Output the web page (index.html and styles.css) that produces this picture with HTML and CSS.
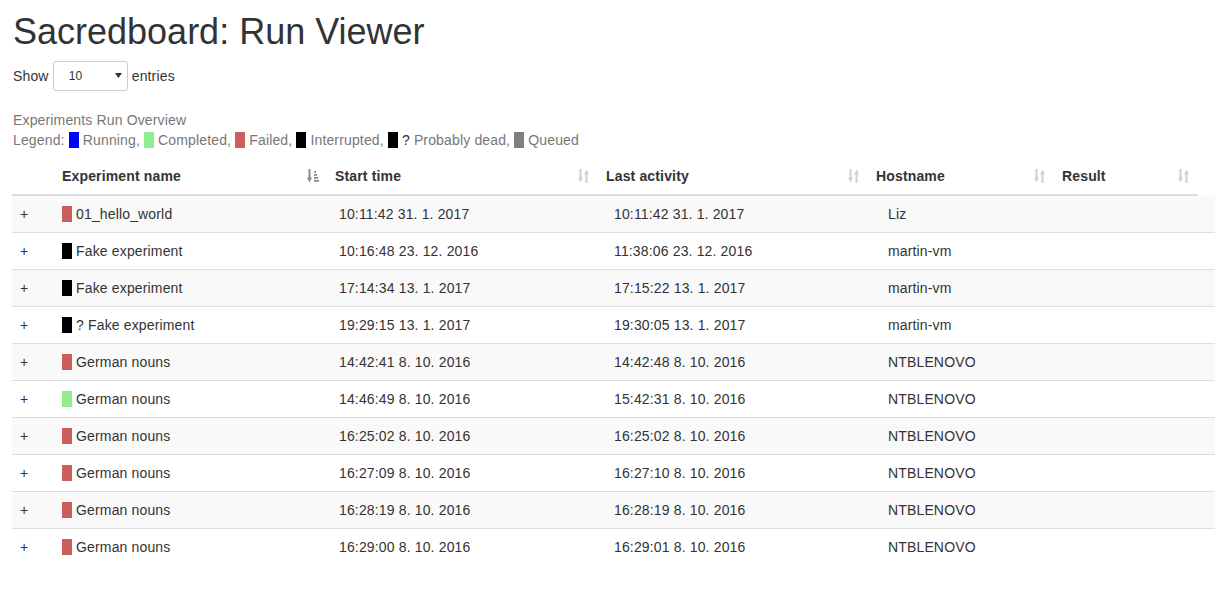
FILE: index.html
```html
<!DOCTYPE html>
<html>
<head>
<meta charset="utf-8">
<title>Sacredboard: Run Viewer</title>
<link rel="stylesheet" href="styles.css">
</head>
<body>
<div class="page">
  <h1 class="title">Sacredboard: Run Viewer</h1>
  <div class="length">Show <span class="select"><span class="select-val">10</span><svg class="select-arrow" width="7" height="5" viewBox="0 0 7 5"><polygon points="0,0 7,0 3.5,5" fill="#333"/></svg></span> entries</div>
  <div class="caption">
    <div>Experiments Run Overview</div>
    <div>Legend: <span class="mk running"></span> Running, <span class="mk completed"></span> Completed, <span class="mk failed"></span> Failed, <span class="mk interrupted"></span> Interrupted, <span class="mk interrupted"></span> <span class="q">?</span> Probably dead, <span class="mk queued"></span> Queued</div>
  </div>

  <table class="grid head-table">
    <colgroup>
      <col class="hc0"><col class="hc1"><col class="hc2"><col class="hc3"><col class="hc4"><col class="hc5">
    </colgroup>
    <thead>
      <tr>
        <th></th>
        <th><div class="th-in"><span>Experiment name</span><svg class="sort sort-asc" width="12" height="14" viewBox="0 0 12 14"><rect x="1.5" y="0" width="2" height="9"/><polygon points="0,8.5 5,8.5 2.5,13.5"/><rect x="7" y="2" width="2" height="1.8"/><rect x="7" y="5" width="3" height="1.8"/><rect x="7" y="8" width="4" height="1.8"/><rect x="7" y="11" width="5" height="1.8"/></svg></div></th>
        <th><div class="th-in"><span>Start time</span><svg class="sort" width="12" height="14" viewBox="0 0 12 14"><rect x="1.5" y="0" width="2" height="9"/><polygon points="0,8.5 5,8.5 2.5,13.5"/><rect x="7.5" y="5" width="2" height="9"/><polygon points="6,5.5 11,5.5 8.5,0.5"/></svg></div></th>
        <th><div class="th-in"><span>Last activity</span><svg class="sort" width="12" height="14" viewBox="0 0 12 14"><rect x="1.5" y="0" width="2" height="9"/><polygon points="0,8.5 5,8.5 2.5,13.5"/><rect x="7.5" y="5" width="2" height="9"/><polygon points="6,5.5 11,5.5 8.5,0.5"/></svg></div></th>
        <th><div class="th-in"><span>Hostname</span><svg class="sort" width="12" height="14" viewBox="0 0 12 14"><rect x="1.5" y="0" width="2" height="9"/><polygon points="0,8.5 5,8.5 2.5,13.5"/><rect x="7.5" y="5" width="2" height="9"/><polygon points="6,5.5 11,5.5 8.5,0.5"/></svg></div></th>
        <th><div class="th-in"><span>Result</span><svg class="sort" width="12" height="14" viewBox="0 0 12 14"><rect x="1.5" y="0" width="2" height="9"/><polygon points="0,8.5 5,8.5 2.5,13.5"/><rect x="7.5" y="5" width="2" height="9"/><polygon points="6,5.5 11,5.5 8.5,0.5"/></svg></div></th>
      </tr>
    </thead>
  </table>

  <table class="grid body-table">
    <colgroup>
      <col class="bc0"><col class="bc1"><col class="bc2"><col class="bc3"><col class="bc4"><col class="bc5">
    </colgroup>
    <tbody>
      <tr><td>+</td><td><span class="mk failed"></span> 01_hello_world</td><td>10:11:42 31. 1. 2017</td><td>10:11:42 31. 1. 2017</td><td>Liz</td><td></td></tr>
      <tr><td>+</td><td><span class="mk interrupted"></span> Fake experiment</td><td>10:16:48 23. 12. 2016</td><td>11:38:06 23. 12. 2016</td><td>martin-vm</td><td></td></tr>
      <tr><td>+</td><td><span class="mk interrupted"></span> Fake experiment</td><td>17:14:34 13. 1. 2017</td><td>17:15:22 13. 1. 2017</td><td>martin-vm</td><td></td></tr>
      <tr><td>+</td><td><span class="mk interrupted"></span> ? Fake experiment</td><td>19:29:15 13. 1. 2017</td><td>19:30:05 13. 1. 2017</td><td>martin-vm</td><td></td></tr>
      <tr><td>+</td><td><span class="mk failed"></span> German nouns</td><td>14:42:41 8. 10. 2016</td><td>14:42:48 8. 10. 2016</td><td>NTBLENOVO</td><td></td></tr>
      <tr><td>+</td><td><span class="mk completed"></span> German nouns</td><td>14:46:49 8. 10. 2016</td><td>15:42:31 8. 10. 2016</td><td>NTBLENOVO</td><td></td></tr>
      <tr><td>+</td><td><span class="mk failed"></span> German nouns</td><td>16:25:02 8. 10. 2016</td><td>16:25:02 8. 10. 2016</td><td>NTBLENOVO</td><td></td></tr>
      <tr><td>+</td><td><span class="mk failed"></span> German nouns</td><td>16:27:09 8. 10. 2016</td><td>16:27:10 8. 10. 2016</td><td>NTBLENOVO</td><td></td></tr>
      <tr><td>+</td><td><span class="mk failed"></span> German nouns</td><td>16:28:19 8. 10. 2016</td><td>16:28:19 8. 10. 2016</td><td>NTBLENOVO</td><td></td></tr>
      <tr><td>+</td><td><span class="mk failed"></span> German nouns</td><td>16:29:00 8. 10. 2016</td><td>16:29:01 8. 10. 2016</td><td>NTBLENOVO</td><td></td></tr>
    </tbody>
  </table>
</div>
</body>
</html>
```
FILE: styles.css
```css
html, body {
  margin: 0;
  padding: 0;
  background: #fff;
}
body {
  font-family: "Liberation Sans", Arial, Helvetica, sans-serif;
  font-size: 14px;
  line-height: 20px;
  color: #333;
  letter-spacing: 0.15px;
}
.page {
  padding: 0 12px;
}
.title {
  font-size: 36px;
  font-weight: 500;
  line-height: 1.1;
  margin: 12px 0 10px;
  padding-left: 1px;
  color: #333;
  letter-spacing: 0;
}
.length {
  display: flex;
  align-items: center;
  height: 30px;
  padding-left: 1px;
  white-space: pre;
  margin-top: -1px;
}
.select {
  display: inline-flex;
  align-items: center;
  justify-content: space-between;
  box-sizing: border-box;
  width: 75px;
  height: 30px;
  border: 1px solid #ccc;
  border-radius: 3px;
  padding: 0 5px 0 15px;
  font-size: 12px;
  background: #fff;
}
.select-arrow {
  display: block;
}
.caption {
  color: #777;
  padding: 8px 0 8px 1px;
  margin-top: 11px;
}
.q {
  color: #333;
}
.mk {
  display: inline-block;
  width: 10px;
  height: 16px;
  vertical-align: -3px;
}
.running { background: #0000ff; }
.completed { background: #90ee90; }
.failed { background: #cd5c5c; }
.interrupted { background: #000; }
.queued { background: #808080; }

.grid {
  border-collapse: collapse;
  border-spacing: 0;
  table-layout: fixed;
}
.head-table { width: 1186px; }
.body-table { width: 1203px; }
.hc0 { width: 42px; }
.hc1 { width: 273px; }
.hc2 { width: 271px; }
.hc3 { width: 270px; }
.hc4 { width: 186px; }
.hc5 { width: 144px; }
.bc0 { width: 42px; }
.bc1 { width: 277px; }
.bc2 { width: 275px; }
.bc3 { width: 274px; }
.bc4 { width: 188px; }
.bc5 { width: 147px; }

.grid th {
  text-align: left;
  font-weight: bold;
  padding: 8px;
  border-bottom: 2px solid #ddd;
  vertical-align: bottom;
}
.th-in {
  display: flex;
  align-items: center;
  justify-content: space-between;
}
.sort {
  display: block;
  fill: #d0d0d0;
  flex: none;
}
.sort-asc {
  fill: #8c8c8c;
}
.grid td {
  padding: 8px;
  border-top: 1px solid #ddd;
  white-space: nowrap;
}
.body-table tr:first-child td {
  border-top: 0;
}
.body-table tr:nth-child(odd) td {
  background: #f9f9f9;
}
```
